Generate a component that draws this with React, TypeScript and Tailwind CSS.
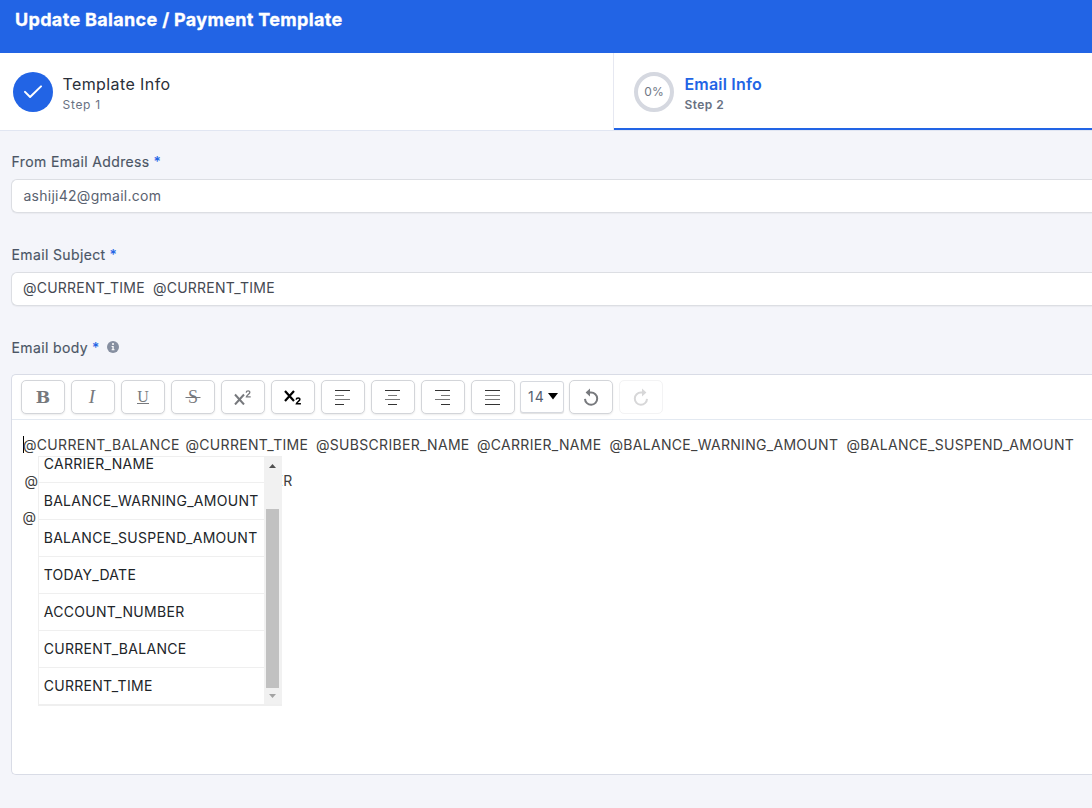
import React from 'react';

const alignLines = {
  left: ['M0 1.5H15', 'M0 6.5H9', 'M0 10.5H15', 'M0 15.5H9'],
  center: ['M0 1.5H15', 'M3 6.5H12', 'M0 10.5H15', 'M3 15.5H12'],
  right: ['M0 1.5H15', 'M6 6.5H15', 'M0 10.5H15', 'M6 15.5H15'],
  justify: ['M0 1.5H15', 'M0 6.5H15', 'M0 10.5H15', 'M0 15.5H15'],
};

function AlignIcon({ kind }: { kind: keyof typeof alignLines }) {
  return (
    <svg width="16" height="16" viewBox="0 0 16 16" fill="none" strokeWidth="1">
      {alignLines[kind].map((d, i) => (
        <path key={i} d={d} stroke={i === 1 || i === 2 ? '#777' : '#333'} />
      ))}
    </svg>
  );
}

function ToolButton({ children, faded }: { children: React.ReactNode; faded?: boolean }) {
  return (
    <button
      className={
        faded
          ? 'flex h-[34px] w-11 shrink-0 items-center justify-center rounded-[5px] border border-[#f3f3f4] bg-white'
          : 'flex h-[34px] w-11 shrink-0 items-center justify-center rounded-[5px] border border-[#d3d5d9] bg-white shadow-[0_1px_2px_rgba(0,0,0,0.08)]'
      }
    >
      {children}
    </button>
  );
}

function HistoryIcon({ redo }: { redo?: boolean }) {
  return (
    <svg width="18" height="18" viewBox="0 0 18 18" fill="none" className={redo ? '-scale-x-100 text-[#d7d7d8]' : 'text-[#77797d]'}>
      <path d="M3 10.9A6.1 6.1 0 1 0 9 4.6H7" stroke="currentColor" strokeWidth="2" />
      <path d="M8 0.4V8.6L3.6 4.5Z" fill="currentColor" />
    </svg>
  );
}

function Label({ children }: { children: string }) {
  return (
    <div className="flex h-5 items-center pl-[0.6px] text-[14px] leading-5 text-[#4b5565]">
      <span className="tracking-[0.36px] [-webkit-text-stroke:0.15px]">{children}</span>
      <span className="ml-1 font-medium text-[#2264e5]">*</span>
    </div>
  );
}

const bodyTokens = [
  { text: '@CURRENT_BALANCE', box: 'w-[162.5px]' },
  { text: '@CURRENT_TIME', box: 'w-[130.5px]' },
  { text: '@SUBSCRIBER_NAME', box: 'w-[161px]' },
  { text: '@CARRIER_NAME', box: 'w-[132.5px]' },
  { text: '@BALANCE_WARNING_AMOUNT', box: 'w-[237px]' },
  { text: '@BALANCE_SUSPEND_AMOUNT', box: 'w-[230px]' },
];

const options = [
  'CARRIER_NAME',
  'BALANCE_WARNING_AMOUNT',
  'BALANCE_SUSPEND_AMOUNT',
  'TODAY_DATE',
  'ACCOUNT_NUMBER',
  'CURRENT_BALANCE',
  'CURRENT_TIME',
];

export default function App() {
  return (
    <div className="h-[808px] w-full overflow-hidden bg-[#f4f5fa] font-['Inter',sans-serif]">
      <header className="h-[53px] bg-[#2264e5] pt-[6px] pl-[15px]">
        <h1 className="text-[18px] leading-[28px] font-bold tracking-[0.33px] whitespace-nowrap text-white [-webkit-text-stroke:0.3px]">Update Balance / Payment Template</h1>
      </header>

      <nav className="flex h-[78px] border-b border-[#e1e6f2] bg-white">
        <div className="flex w-[614px] shrink-0 border-r border-[#e6e8f1] pt-[19px] pl-[13px]">
          <div className="flex size-10 items-center justify-center rounded-full bg-[#2264e5]">
            <svg width="20" height="14" viewBox="0 0 20 14" fill="none" stroke="white" strokeWidth="2" strokeLinecap="round" strokeLinejoin="round">
              <path d="M2 6.9L7.1 12L18 1.4" />
            </svg>
          </div>
          <div className="ml-[9.5px]">
            <div className="text-[16px] leading-6 tracking-[0.4px] text-[#2a2f39]">Template Info</div>
            <div className="mt-px text-[12px] leading-4 tracking-[0.7px] text-[#687182]">Step 1</div>
          </div>
        </div>
        <div className="flex h-[77px] grow border-b-2 border-[#2264e5] pt-[19px] pl-5">
          <div className="flex size-10 items-center justify-center rounded-full border-4 border-[#d5d8e0] text-[12px] text-[#707785]">0%</div>
          <div className="ml-[10.4px]">
            <div className="text-[16px] leading-6 font-semibold tracking-[0.2px] text-[#2264e5]">Email Info</div>
            <div className="mt-px text-[12px] leading-4 font-semibold tracking-[0.45px] text-[#687182]">Step 2</div>
          </div>
        </div>
      </nav>

      <main className="pt-[21px] pl-[11px]">
        <Label>From Email Address</Label>
        <div className="mt-[7px] flex h-[34px] items-center rounded-l-[6px] border border-r-0 border-[#dcdee3] bg-white pb-[2px] pl-[11.4px] text-[14px] tracking-[0.27px] text-[#5a6270] shadow-[0_1px_1px_rgba(0,0,0,0.04)]">
          ashiji42@gmail.com
        </div>

        <div className="mt-8">
          <Label>Email Subject</Label>
        </div>
        <div className="mt-[7px] flex h-[34px] items-center rounded-l-[6px] border border-r-0 border-[#dcdee3] bg-white pb-[3px] pl-[11px] text-[14px] tracking-[0.23px] text-[#454952] shadow-[0_1px_1px_rgba(0,0,0,0.04)]">
          <span className="w-[130px]">@CURRENT_TIME</span>
          <span>@CURRENT_TIME</span>
        </div>

        <div className="mt-8 flex items-center">
          <Label>Email body</Label>
          <svg className="mb-[2px] ml-2" width="12" height="12" viewBox="0 0 12 12">
            <circle cx="6" cy="6" r="6" fill="#868fa0" />
            <circle cx="6" cy="3" r="1" fill="white" />
            <path d="M4.6 5H6.7V8.3H7.5V9.3H4.6V8.3H5.4V6H4.6Z" fill="white" />
          </svg>
        </div>

        <section className="relative mt-4 h-[401px] rounded-l-[5px] border border-r-0 border-[#d9dce6] bg-white">
          <div className="flex h-[45px] items-start gap-[6px] border-b border-[#e3e9f1] pt-[5px] pl-[9px]">
            <ToolButton>
              <span className="pt-px font-['DejaVu_Serif',serif] text-[17px] font-bold text-[#77797d]">B</span>
            </ToolButton>
            <ToolButton>
              <span className="pr-[2px] font-['Liberation_Serif',serif] text-[19px] text-[#77797d] italic">I</span>
            </ToolButton>
            <ToolButton>
              <span className="border-b border-[#77797d] font-['Liberation_Serif',serif] text-[16px] leading-[13px] text-[#77797d]">U</span>
            </ToolButton>
            <ToolButton>
              <svg width="16" height="24" viewBox="0 0 16 24">
                <text x="8" y="18" textAnchor="middle" fontFamily="Liberation Serif" fontSize="18" fill="#77797d">S</text>
                <path d="M0.5 12.5H15.5" stroke="#77797d" />
              </svg>
            </ToolButton>
            <ToolButton>
              <svg width="18" height="16" viewBox="0 0 18 16" fill="none" stroke="#77797d" strokeWidth="2">
                <path d="M1 5.5L10 15.5M10 5.5L1 15.5" />
                <path d="M12.2 3.6C12.4 1.4 16 1.4 15.8 3.6C15.7 5 12.8 6 12.4 7.8H16.7" strokeWidth="1.3" />
              </svg>
            </ToolButton>
            <ToolButton>
              <svg width="18" height="16" viewBox="0 0 18 16" fill="none" stroke="#000" strokeWidth="2.2">
                <path d="M1 2L10 12M10 2L1 12" />
                <path d="M12.2 10.6C12.4 8.4 16 8.4 15.8 10.6C15.7 12 12.8 13 12.4 14.8H16.9" strokeWidth="1.6" />
              </svg>
            </ToolButton>
            <ToolButton><AlignIcon kind="left" /></ToolButton>
            <ToolButton><AlignIcon kind="center" /></ToolButton>
            <ToolButton><AlignIcon kind="right" /></ToolButton>
            <ToolButton><AlignIcon kind="justify" /></ToolButton>
            <div className="mt-px -ml-px flex h-8 w-11 shrink-0 items-center rounded-[3px] border border-[#d6d9df] bg-white pl-[7px] text-[14px] tracking-[1px] text-[#545e6f] shadow-[0_1px_1px_rgba(0,0,0,0.12)]">
              <span className="w-[20px] pb-px">14</span>
              <svg width="10" height="7" viewBox="0 0 10 7" className="mb-[2px] shrink-0">
                <path d="M0 0H10L5 6.5Z" />
              </svg>
            </div>
            <div className="-ml-px flex gap-[6px]">
              <ToolButton><HistoryIcon /></ToolButton>
              <ToolButton faded><HistoryIcon redo /></ToolButton>
            </div>
          </div>

          <div className="pt-[15px] text-[14px] leading-5 tracking-[0.3px] whitespace-nowrap text-[#404040]">
            <div className="flex pl-[11px]">
              <span className="-mr-px mt-[1px] h-[17px] w-px bg-black" />
              {bodyTokens.map((t) => (
                <span key={t.text} className={`${t.box} shrink-0`}>{t.text}</span>
              ))}
            </div>
            <div className="mt-4 flex pl-[12.5px]">
              <span className="w-[250px]">@</span>
              <span>ER</span>
            </div>
            <div className="mt-4 pl-[10.5px]">@</div>
          </div>

          <div className="absolute top-[81px] left-[26px] flex h-[250px] w-[244px] border border-r-0 border-b-2 border-[#efefef] bg-[#f1f1f1]">
            <ul className="w-[225px] bg-white">
              {options.map((o) => (
                <li key={o} className="h-[37px] border-b border-[#efefef] pl-[4.7px] text-[14px] leading-[36px] tracking-[0.3px] whitespace-nowrap text-[#212529] first:h-[26px] first:leading-[14px] last:h-9 last:border-b-0">
                  {o}
                </li>
              ))}
            </ul>
            <div className="ml-[2px] flex w-[13px] flex-col items-center">
              <svg className="mt-[7px]" width="7" height="4" viewBox="0 0 7 4"><path d="M0 4H7L3.5 0Z" fill="#505050" /></svg>
              <div className="mt-[41px] h-[179px] w-[13px] bg-[#c1c1c1]" />
              <svg className="mt-[6px]" width="7" height="4" viewBox="0 0 7 4"><path d="M0 0H7L3.5 4Z" fill="#a3a3a3" /></svg>
            </div>
          </div>
        </section>
      </main>
    </div>
  );
}
